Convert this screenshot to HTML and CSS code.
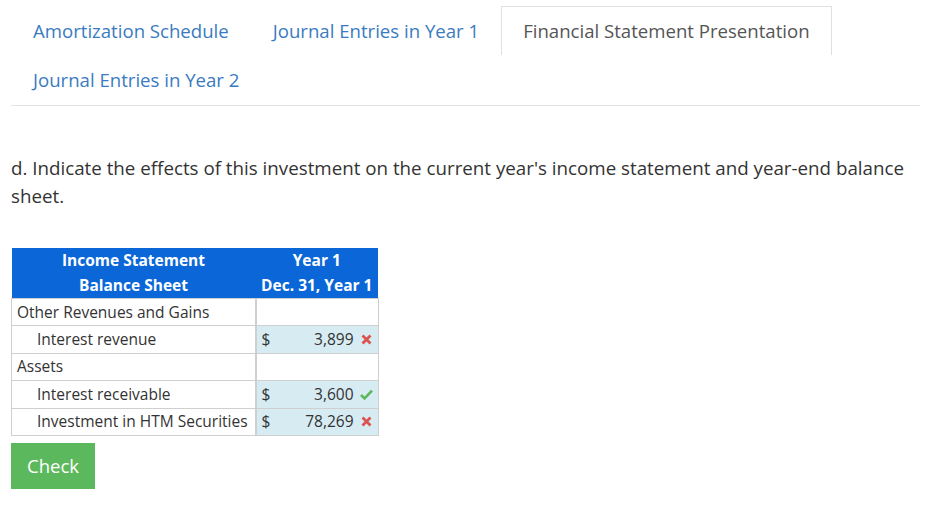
FILE: index.html
```html
<!DOCTYPE html>
<html>
<head>
<meta charset="utf-8">
<link rel="stylesheet" href="styles.css">
</head>
<body>
<div class="page">
  <ul class="tabs">
    <li class="tab"><a>Amortization Schedule</a></li>
    <li class="tab"><a>Journal Entries in Year 1</a></li>
    <li class="tab active"><a>Financial Statement Presentation</a></li>
    <li class="tab"><a>Journal Entries in Year 2</a></li>
  </ul>
  <p class="question">d. Indicate the effects of this investment on the current year's income statement and year-end balance sheet.</p>
  <table class="fs">
    <thead>
      <tr>
        <th class="label-h">Income Statement<br>Balance Sheet</th>
        <th class="val-h">Year 1<br>Dec. 31, Year 1</th>
      </tr>
    </thead>
    <tbody>
      <tr><td class="lbl">Other Revenues and Gains</td><td class="blank"></td></tr>
      <tr><td class="lbl indent">Interest revenue</td><td class="val"><div class="vwrap"><span class="cur">$</span><span class="num">3,899</span><span class="mark"><svg width="11" height="11" viewBox="0 0 11 11"><path d="M1.5 1.5 L9.5 9.5 M9.5 1.5 L1.5 9.5" stroke="#dc5451" stroke-width="2.8" stroke-linecap="butt"/></svg></span></div></td></tr>
      <tr><td class="lbl">Assets</td><td class="blank"></td></tr>
      <tr><td class="lbl indent">Interest receivable</td><td class="val"><div class="vwrap"><span class="cur">$</span><span class="num">3,600</span><span class="mark"><svg width="13" height="11" viewBox="0 0 13 11"><path d="M1 6 L4.6 9.4 L12 1.6" fill="none" stroke="#5cb85c" stroke-width="2.6"/></svg></span></div></td></tr>
      <tr><td class="lbl indent">Investment in HTM Securities</td><td class="val"><div class="vwrap"><span class="cur">$</span><span class="num">78,269</span><span class="mark"><svg width="11" height="11" viewBox="0 0 11 11"><path d="M1.5 1.5 L9.5 9.5 M9.5 1.5 L1.5 9.5" stroke="#dc5451" stroke-width="2.8" stroke-linecap="butt"/></svg></span></div></td></tr>
    </tbody>
  </table>
  <button class="check">Check</button>
</div>
</body>
</html>
```
FILE: styles.css
```css
html, body {
  margin: 0;
  padding: 0;
  background: #fff;
}
body {
  font-family: "Open Sans", "DejaVu Sans", sans-serif;
  color: #333;
}
.page {
  padding: 6px 7px 0 11px;
}
.tabs {
  list-style: none;
  margin: 0;
  padding: 0;
  display: flex;
  flex-wrap: wrap;
  border-bottom: 1px solid #e3e3e3;
}
.tab a {
  display: block;
  padding: 10px 21px 11px;
  font-size: 18.6px;
  line-height: 27px;
  color: #3a7bbf;
  border: 1px solid transparent;
  border-bottom: none;
}
.tab:nth-child(4) a {
  padding-bottom: 12px;
}
.tab.active a {
  color: #555;
  border-color: #dfe0e6;
}
.question {
  margin: 48px 0 0;
  font-size: 18.75px;
  line-height: 28px;
  color: #333;
}
.fs {
  margin-top: 38px;
  border-collapse: collapse;
  font-size: 15.5px;
}
.fs th {
  background: #0b67d7;
  color: #fff;
  font-weight: bold;
  font-size: 15.5px;
  line-height: 25px;
  padding: 0 5px;
  text-align: center;
}
.label-h {
  width: 234px;
}
.fs td {
  border: 1px solid #cfcfcf;
  height: 26.4px;
  padding: 0 5px;
  line-height: 25px;
}
.fs td.lbl {
  border-right: 2px solid #cfcfcf;
  white-space: nowrap;
}
.fs td.indent {
  padding-left: 25px;
}
.fs td.val {
  background: #d7ebf2;
  padding: 0 4px 0 5px;
  width: 112px;
}
.vwrap {
  display: flex;
  align-items: center;
}
.cur {
  width: 12px;
}
.num {
  flex: 1;
  text-align: right;
}
.mark {
  width: 14px;
  margin-left: 6px;
  display: flex;
  align-items: center;
  justify-content: center;
}
.check {
  margin-top: 7px;
  background: #5cb85c;
  color: #fff;
  border: none;
  font-family: "Open Sans", sans-serif;
  font-size: 18.5px;
  line-height: 26px;
  padding: 10px 16px;
  display: block;
}
```
